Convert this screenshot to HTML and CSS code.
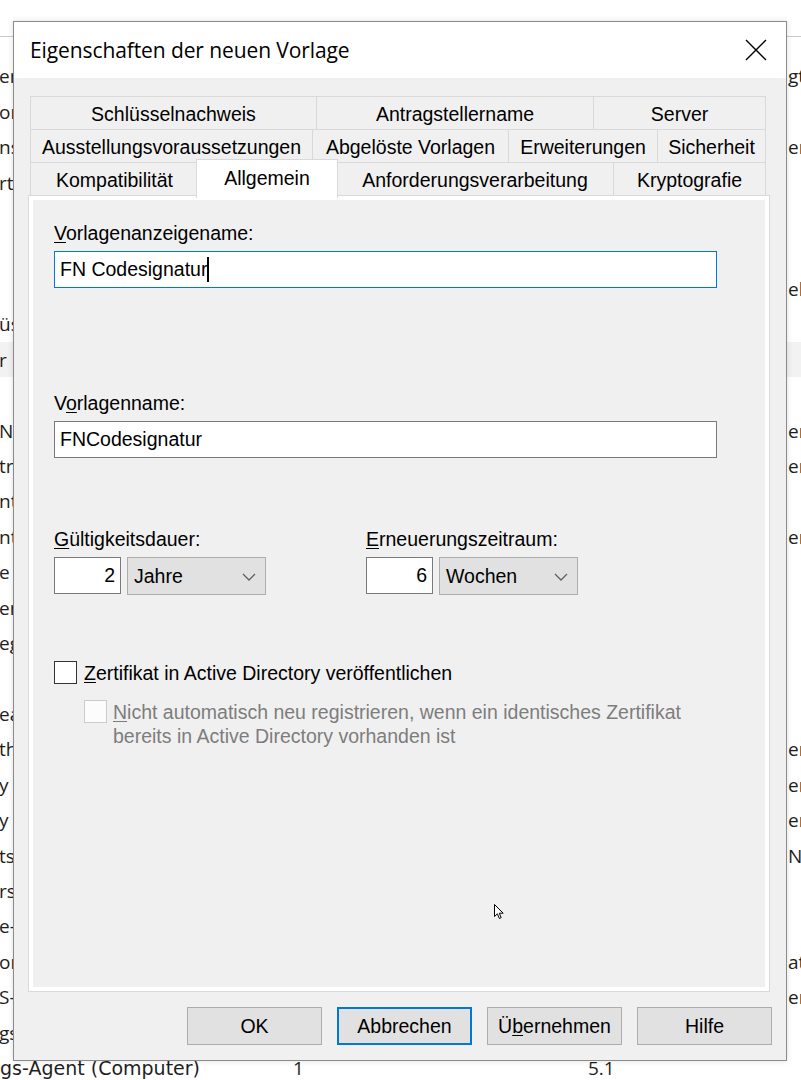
FILE: index.html
```html
<!DOCTYPE html>
<html lang="de">
<head>
<meta charset="utf-8">
<title>Eigenschaften der neuen Vorlage</title>
<link rel="stylesheet" href="styles.css">
</head>
<body>
<div class="bg">
  <div class="bg-head"></div>
  <div class="bg-rows">
    <div class="bg-row"><span class="c1">er</span><span class="c4">gt</span></div>
    <div class="bg-row"><span class="c1">or</span><span class="c4"></span></div>
    <div class="bg-row"><span class="c1">ns</span><span class="c4">er</span></div>
    <div class="bg-row"><span class="c1">rt</span><span class="c4"></span></div>
    <div class="bg-row"><span class="c1"></span><span class="c4"></span></div>
    <div class="bg-row"><span class="c1"></span><span class="c4"></span></div>
    <div class="bg-row"><span class="c1"></span><span class="c4">elr</span></div>
    <div class="bg-row"><span class="c1">üs</span><span class="c4"></span></div>
    <div class="bg-row sel"><span class="c1">r</span><span class="c4"></span></div>
    <div class="bg-row"><span class="c1"></span><span class="c4"></span></div>
    <div class="bg-row"><span class="c1">N</span><span class="c4">er</span></div>
    <div class="bg-row"><span class="c1">tr</span><span class="c4">er</span></div>
    <div class="bg-row"><span class="c1">nt</span><span class="c4"></span></div>
    <div class="bg-row"><span class="c1">nt</span><span class="c4">er</span></div>
    <div class="bg-row"><span class="c1">e</span><span class="c4"></span></div>
    <div class="bg-row"><span class="c1">en</span><span class="c4"></span></div>
    <div class="bg-row"><span class="c1">eg</span><span class="c4"></span></div>
    <div class="bg-row"><span class="c1"></span><span class="c4"></span></div>
    <div class="bg-row"><span class="c1">ea</span><span class="c4"></span></div>
    <div class="bg-row"><span class="c1">th</span><span class="c4">er</span></div>
    <div class="bg-row"><span class="c1">y /</span><span class="c4">ery</span></div>
    <div class="bg-row"><span class="c1">y /</span><span class="c4">ery</span></div>
    <div class="bg-row"><span class="c1">ts</span><span class="c4">Ne</span></div>
    <div class="bg-row"><span class="c1">rs</span><span class="c4"></span></div>
    <div class="bg-row"><span class="c1">e-</span><span class="c4"></span></div>
    <div class="bg-row"><span class="c1">or</span><span class="c4">at</span></div>
    <div class="bg-row"><span class="c1">S-</span><span class="c4">er</span></div>
    <div class="bg-row"><span class="c1">gs</span><span class="c4"></span></div>
    <div class="bg-row"><span class="c1 endcut"><span>Registrierungs-Agent (Computer)</span></span><span class="c2">1</span><span class="c3">5.1</span><span class="c4"></span></div>
  </div>
</div>

<div class="dialog">
  <div class="titlebar">
    <span class="title">Eigenschaften der neuen Vorlage</span>
    <span class="close"><svg width="22" height="22" viewBox="0 0 22 22"><path d="M1 1 L21 21 M21 1 L1 21" stroke="#000" stroke-width="1.4" fill="none"/></svg></span>
  </div>
  <div class="body">
    <div class="tabs">
      <div class="tabrow r1">
        <div class="tab">Schlüsselnachweis</div>
        <div class="tab">Antragstellername</div>
        <div class="tab last">Server</div>
      </div>
      <div class="tabrow r2">
        <div class="tab">Ausstellungsvoraussetzungen</div>
        <div class="tab">Abgelöste Vorlagen</div>
        <div class="tab">Erweiterungen</div>
        <div class="tab last">Sicherheit</div>
      </div>
      <div class="tabrow r3">
        <div class="tab">Kompatibilität</div>
        <div class="tab active">Allgemein</div>
        <div class="tab">Anforderungsverarbeitung</div>
        <div class="tab last">Kryptografie</div>
      </div>
    </div>
    <div class="panel">
      <div class="page">
        <div class="label"><u>V</u>orlagenanzeigename:</div>
        <div class="textbox focused">FN Codesignatur<span class="caret"></span></div>
        <div class="label l2">V<u>o</u>rlagenname:</div>
        <div class="textbox">FNCodesignatur</div>
        <div class="periods">
          <div class="period">
            <div class="label"><u>G</u>ültigkeitsdauer:</div>
            <div class="spin">
              <div class="num">2</div>
              <div class="combo"><span>Jahre</span><svg width="14" height="8" viewBox="0 0 14 8"><path d="M1 1 L7 7 L13 1" stroke="#606060" stroke-width="1.3" fill="none"/></svg></div>
            </div>
          </div>
          <div class="period">
            <div class="label"><u>E</u>rneuerungszeitraum:</div>
            <div class="spin">
              <div class="num">6</div>
              <div class="combo"><span>Wochen</span><svg width="14" height="8" viewBox="0 0 14 8"><path d="M1 1 L7 7 L13 1" stroke="#606060" stroke-width="1.3" fill="none"/></svg></div>
            </div>
          </div>
        </div>
        <div class="check">
          <span class="box"></span>
          <span class="ctext"><u>Z</u>ertifikat in Active Directory veröffentlichen</span>
        </div>
        <div class="check sub disabled">
          <span class="box"></span>
          <span class="ctext"><u>N</u>icht automatisch neu registrieren, wenn ein identisches Zertifikat<br>bereits in Active Directory vorhanden ist</span>
        </div>
      </div>
    </div>
    <div class="buttons">
      <div class="btn">OK</div>
      <div class="btn default">Abbrechen</div>
      <div class="btn">Ü<u>b</u>ernehmen</div>
      <div class="btn">Hilfe</div>
    </div>
  </div>
</div>

<svg class="cursor" width="11" height="16" viewBox="0 0 11 16"><path d="M0.5 0.5 L0.5 12.5 L3.4 9.8 L5.4 14.5 L7.2 13.7 L5.3 9.2 L9.2 9.2 Z" fill="#fff" stroke="#000" stroke-width="1" stroke-linejoin="miter"/></svg>
</body>
</html>
```

FILE: styles.css
```css
* { box-sizing: border-box; }
html, body { margin: 0; padding: 0; }
body {
  width: 801px;
  height: 1080px;
  overflow: hidden;
  background: #fff;
  position: relative;
  font-family: "Liberation Sans", Arial, sans-serif;
  color: #000;
}

/* background window (list view behind the dialog) */
.bg { width: 801px; height: 1080px; overflow: hidden; }
.bg-head {
  height: 37px;
  border-bottom: 1px solid #c9c9c9;
}
.bg-rows { padding-top: 21.6px; }
.bg-row {
  height: 35.43px;
  display: grid;
  grid-template-columns: 293px 295px 199px 1fr;
  align-items: center;
  font-family: "Open Sans", "Noto Sans", sans-serif;
  font-size: 19px;
  color: #1e1e1e;
  white-space: nowrap;
}
.bg-row.sel { background: #f2f2f2; }
.bg-row .c1 { grid-column: 1; margin-left: -1px; }
.bg-row .c1.endcut {
  width: 200px;
  margin-left: 0;
  display: flex;
  justify-content: flex-end;
  font-family: "DejaVu Sans", Verdana, sans-serif;
}
.bg-row .c2 { grid-column: 2; }
.bg-row .c3 { grid-column: 3; }
.bg-row .c4 { grid-column: 4; margin-left: 1px; }

/* dialog */
.dialog {
  position: absolute;
  left: 13px;
  top: 21px;
  width: 774px;
  height: 1040px;
  border: 1px solid #8a8a8a;
  background: #f0f0f0;
  box-shadow: 0 0 6px rgba(0,0,0,0.12);
  display: flex;
  flex-direction: column;
}
.titlebar {
  height: 56px;
  background: #fff;
  display: flex;
  align-items: center;
  justify-content: space-between;
  padding: 0 19px 0 16px;
}
.title {
  font-family: "Open Sans", "Noto Sans", sans-serif;
  font-size: 21px;
  color: #000;
  letter-spacing: -0.1px;
}
.close { display: flex; width: 22px; height: 22px; }

.body {
  flex: 1;
  padding: 18px 14px 0 14px;
  display: flex;
  flex-direction: column;
}

/* tabs */
.tabs { margin-left: 2px; width: 736px; }
.tabrow {
  display: grid;
  height: 33px;
}
.r1 { grid-template-columns: 286px 277px 173px; }
.r2 { grid-template-columns: 282px 196px 149px 109px; }
.r3 { grid-template-columns: 168px 138px 277px 153px; }
.tab {
  border-top: 1px solid #d9d9d9;
  border-left: 1px solid #d9d9d9;
  background: #f0f0f0;
  font-size: 19.5px;
  display: flex;
  align-items: center;
  justify-content: center;
  white-space: nowrap;
  padding-top: 2px;
}
.tab.last { border-right: 1px solid #d9d9d9; }
.tab.active {
  position: relative;
  z-index: 2;
  background: #fff;
  border: 1px solid #d9d9d9;
  border-bottom: none;
  margin: -3px -2px -3px -2px;
  padding-top: 0;
  padding-bottom: 2px;
}

.panel {
  height: 797px;
  width: 742px;
  border: 1px solid #d9d9d9;
  background: #fff;
  padding: 4px;
}
.page {
  height: 100%;
  background: #f0f0f0;
  padding: 21.5px 0 0 21px;
}
.label {
  font-size: 19.5px;
  line-height: 22px;
  height: 22px;
  white-space: nowrap;
}
.label u, .ctext u, .btn u { text-underline-offset: 2px; }
.textbox {
  margin-top: 7.5px;
  width: 663px;
  height: 37px;
  border: 1px solid #7a7a7a;
  background: #fff;
  font-size: 19.5px;
  display: flex;
  align-items: center;
  padding-left: 5px;
  white-space: nowrap;
}
.textbox.focused { border-color: #0078d7; }
.caret {
  display: inline-block;
  width: 1.5px;
  height: 25px;
  background: #000;
}
.l2 { margin-top: 103.5px; }
.periods {
  margin-top: 69.5px;
  display: grid;
  grid-template-columns: 312px auto;
}
.spin {
  margin-top: 7.5px;
  display: flex;
  gap: 6px;
}
.num {
  width: 67px;
  height: 37px;
  border: 1px solid #7a7a7a;
  background: #fff;
  font-size: 19.5px;
  display: flex;
  align-items: center;
  justify-content: flex-end;
  padding-right: 5px;
}
.combo {
  width: 139px;
  height: 38px;
  border: 1px solid #adadad;
  background: #e1e1e1;
  font-size: 19.5px;
  display: flex;
  align-items: center;
  justify-content: space-between;
  padding: 0 9px 0 6px;
}
.combo svg { margin-top: 1px; }

.check {
  margin-top: 66px;
  display: flex;
  align-items: flex-start;
  font-size: 19.5px;
  line-height: 24px;
}
.check .box {
  flex: none;
  width: 23px;
  height: 23px;
  border: 1px solid #333;
  background: #fff;
  margin-right: 7px;
}
.check.sub { margin-top: 15px; margin-left: 30px; }
.check.sub .box { margin-right: 6px; }
.check.disabled { color: #7d7d7d; }
.check.disabled .box { border-color: #cccccc; background: #fcfcfc; }

.buttons {
  display: flex;
  justify-content: flex-end;
  gap: 15px;
  margin-top: 15px;
}
.btn {
  width: 135px;
  height: 38px;
  border: 1px solid #adadad;
  background: #e1e1e1;
  font-size: 19.5px;
  display: flex;
  align-items: center;
  justify-content: center;
}
.btn.default { border: 2px solid #0078d7; }

.cursor {
  position: absolute;
  left: 494px;
  top: 904px;
}
```
